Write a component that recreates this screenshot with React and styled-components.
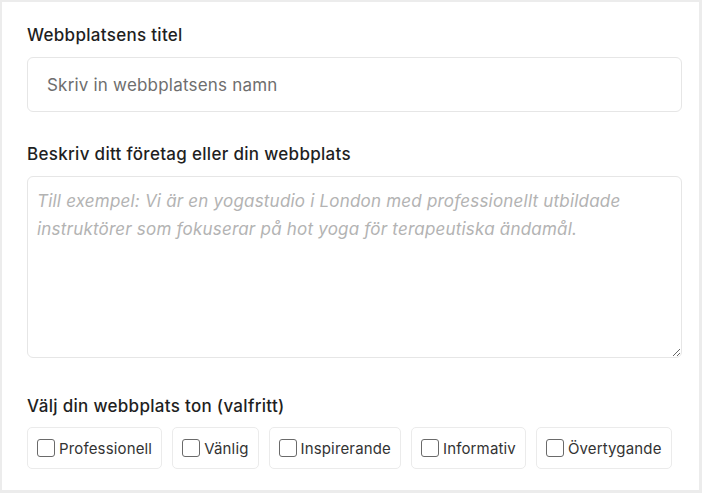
import React from 'react';
import styled, { createGlobalStyle } from 'styled-components';

const GlobalStyle = createGlobalStyle`
    * {
        box-sizing: border-box;
    }
    html, body {
        margin: 0;
        padding: 0;
        background-color: #ececec;
    }
    body {
        font-family: 'Inter', 'Noto Sans', sans-serif;
        color: #222222;
    }
`;

const tones = ['Professionell', 'Vänlig', 'Inspirerande', 'Informativ', 'Övertygande'];

function App() {
    return (
        <>
            <GlobalStyle />
            <StCard>
                <StField>
                    <StLabel htmlFor='site-title'>Webbplatsens titel</StLabel>
                    <StInput id='site-title' placeholder='Skriv in webbplatsens namn' />
                </StField>
                <StField>
                    <StLabel htmlFor='site-desc'>Beskriv ditt företag eller din webbplats</StLabel>
                    <StTextarea
                        id='site-desc'
                        placeholder='Till exempel: Vi är en yogastudio i London med professionellt utbildade instruktörer som fokuserar på hot yoga för terapeutiska ändamål.'
                    />
                </StField>
                <StField $top={6}>
                    <StLabel as='span'>Välj din webbplats ton (valfritt)</StLabel>
                    <StChips>
                        {tones.map((tone) => (
                            <StChip key={tone}>
                                <StCheck type='checkbox' />
                                {tone}
                            </StChip>
                        ))}
                    </StChips>
                </StField>
            </StCard>
        </>
    );
}

const StCard = styled.div`
    margin: 2px 3px 3px 2px;
    height: 488px;
    background-color: #ffffff;
    padding: 23px 17px 0 25px;
    display: flex;
    flex-direction: column;
    gap: 32px;
`;
const StField = styled.div`
    display: flex;
    flex-direction: column;
    gap: 11px;
    margin-top: ${(props) => props.$top || 0}px;
`;
const StLabel = styled.label`
    font-size: 17px;
    font-weight: 500;
    letter-spacing: 0.3px;
    line-height: 21px;
    color: #1f1f1f;
`;
const StInput = styled.input`
    width: 100%;
    height: 55px;
    border: 1px solid #e6e6e6;
    border-radius: 6px;
    padding: 0 19px;
    font-family: inherit;
    font-size: 17px;
    letter-spacing: 0.2px;
    color: #222222;
    outline: none;
    &::placeholder {
        color: #6e6e6e;
    }
`;
const StTextarea = styled.textarea`
    width: 100%;
    height: 182px;
    border: 1px solid #e6e6e6;
    border-radius: 6px;
    padding: 10px 9px;
    font-family: inherit;
    font-size: 17px;
    letter-spacing: 0.2px;
    line-height: 28px;
    color: #222222;
    resize: vertical;
    outline: none;
    &::placeholder {
        color: #b3b3b3;
        font-style: italic;
    }
`;
const StChips = styled.div`
    display: flex;
    gap: 10px;
    margin-top: -1px;
`;
const StChip = styled.label`
    display: flex;
    align-items: center;
    gap: 4px;
    height: 42px;
    padding: 0 9px;
    border: 1px solid #ebebeb;
    border-radius: 5px;
    font-size: 15px;
    letter-spacing: 0.15px;
    color: #333333;
    cursor: pointer;
`;
const StCheck = styled.input`
    appearance: none;
    margin: 0;
    width: 18px;
    height: 18px;
    border: 1px solid #6a6a6a;
    border-radius: 3px;
    background-color: #ffffff;
    &:checked {
        background-color: #333333;
    }
`;

export default App;
